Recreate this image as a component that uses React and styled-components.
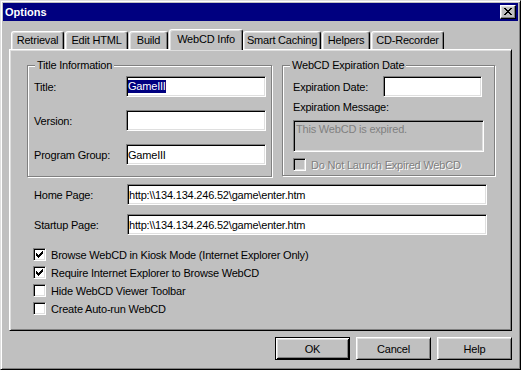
import React from "react";
import styled, { createGlobalStyle } from "styled-components";

const GlobalStyle = createGlobalStyle`
  html, body { margin: 0; padding: 0; background: #c0c0c0; }
  body {
    font-family: "Liberation Sans", Arial, sans-serif;
    font-size: 11px;
    letter-spacing: -0.2px;
    color: #000;
  }
  * { box-sizing: border-box; }
`;

const Window = styled.div`
  width: 521px;
  height: 370px;
  background: #c0c0c0;
  border: 1px solid;
  border-color: #dfdfdf #000 #000 #dfdfdf;
  box-shadow: inset 1px 1px #fff, inset -1px -1px #808080;
  padding: 2px;
  display: flex;
  flex-direction: column;
`;

const TitleBar = styled.div`
  height: 18px;
  background: #000080;
  color: #fff;
  font-weight: bold;
  letter-spacing: 0;
  display: flex;
  align-items: center;
  justify-content: space-between;
  padding: 0 2px 0 2px;
`;

const CloseButton = styled.div`
  width: 16px;
  height: 14px;
  background: #c0c0c0;
  border: 1px solid;
  border-color: #fff #000 #000 #fff;
  box-shadow: inset -1px -1px #808080, inset 1px 1px #dfdfdf;
  display: flex;
  align-items: center;
  justify-content: center;
  padding-bottom: 1px;
`;

const Body = styled.div`
  padding: 8px 6px 0 6px;
  display: flex;
  flex-direction: column;
`;

const TabRow = styled.div`
  display: flex;
  align-items: flex-end;
  height: 20px;
  padding-left: 2px;
`;

const Tab = styled.div`
  position: relative;
  z-index: ${(p) => (p.$active ? 2 : 0)};
  width: ${(p) => p.$w}px;
  height: ${(p) => (p.$active ? 21 : 18)}px;
  margin-bottom: ${(p) => (p.$active ? -1 : 0)}px;
  margin-right: ${(p) => (p.$active ? 0 : 1)}px;
  background: #c0c0c0;
  border-top: 1px solid #fff;
  border-left: 1px solid #fff;
  border-right: 1px solid #000;
  border-radius: 3px 3px 0 0;
  box-shadow: inset -1px 0 #808080, inset 1px 1px #dfdfdf;
  display: flex;
  align-items: center;
  justify-content: center;
  padding-bottom: ${(p) => (p.$active ? 3 : 1)}px;
  white-space: nowrap;
`;

const Panel = styled.div`
  position: relative;
  z-index: 1;
  height: 282px;
  background: #c0c0c0;
  border: 1px solid;
  border-color: #fff #000 #000 #fff;
  box-shadow: inset 1px 1px #dfdfdf, inset -1px -1px #808080;
  padding: 15px 16px 0 17px;
`;

const GroupRow = styled.div`
  display: flex;
  align-items: flex-start;
  gap: 10px;
`;

const Group = styled.div`
  position: relative;
  width: ${(p) => p.$w}px;
  height: ${(p) => p.$h}px;
  border: 1px solid #808080;
  box-shadow: inset 1px 1px #fff, 1px 1px #fff;
  padding: 10px 0 0 ${(p) => p.$pl}px;
  display: flex;
  flex-direction: column;
`;

const Legend = styled.span`
  position: absolute;
  top: -7px;
  left: 7px;
  padding: 0 2px;
  line-height: 13px;
  background: #c0c0c0;
`;

const FormRow = styled.div`
  display: flex;
  align-items: center;
  height: 21px;
  margin-bottom: ${(p) => p.$gap || 0}px;
`;

const Label = styled.span`
  width: ${(p) => p.$w}px;
  flex: none;
`;

const Field = styled.div`
  width: ${(p) => p.$w}px;
  height: ${(p) => p.$h || 21}px;
  flex: none;
  background: ${(p) => (p.$disabled ? "#c0c0c0" : "#fff")};
  color: ${(p) => (p.$disabled ? "#808080" : "#000")};
  border: 1px solid;
  border-color: #808080 #fff #fff #808080;
  box-shadow: inset 1px 1px #000, inset -1px -1px #dfdfdf;
  padding: ${(p) => (p.$multi ? "2px 2px" : "0 1px")};
  display: flex;
  align-items: ${(p) => (p.$multi ? "flex-start" : "center")};
  white-space: nowrap;
  overflow: hidden;
`;

const Selected = styled.span`
  background: #000080;
  color: #fff;
  line-height: 13px;
`;

const ExpLabel = styled.div`
  line-height: 13px;
  margin: 4px 0 6px;
`;

const PageRows = styled.div`
  display: flex;
  flex-direction: column;
  gap: 9px;
  margin-top: 7px;
  padding-left: 7px;
`;

const CheckList = styled.div`
  display: flex;
  flex-direction: column;
  gap: 5px;
  margin-top: 13px;
  padding-left: 6px;
`;

const CheckRow = styled.div`
  display: flex;
  align-items: center;
  height: 13px;
  margin-top: ${(p) => p.$mt || 0}px;
  color: ${(p) => (p.$disabled ? "#808080" : "#000")};
  text-shadow: ${(p) => (p.$disabled ? "1px 1px #fff" : "none")};
  white-space: nowrap;
`;

const Box = styled.span`
  width: 13px;
  height: 13px;
  flex: none;
  margin-right: 5px;
  background: ${(p) => (p.$disabled ? "#c0c0c0" : "#fff")};
  border: 1px solid;
  border-color: #808080 #fff #fff #808080;
  box-shadow: inset 1px 1px #000, inset -1px -1px #dfdfdf;
  display: flex;
  align-items: center;
  justify-content: center;
`;

const ButtonRow = styled.div`
  display: flex;
  justify-content: flex-end;
  gap: 6px;
  margin-top: 6px;
`;

const Button = styled.div`
  width: 75px;
  height: 23px;
  background: #c0c0c0;
  border: 1px solid;
  border-color: ${(p) => (p.$default ? "#000" : "#fff #000 #000 #fff")};
  box-shadow: ${(p) =>
    p.$default
      ? "inset 1px 1px #fff, inset -1px -1px #000, inset 2px 2px #dfdfdf, inset -2px -2px #808080"
      : "inset 1px 1px #dfdfdf, inset -1px -1px #808080"};
  display: flex;
  align-items: center;
  justify-content: center;
`;

const Pixels = ({ rows, color = "#000" }) => (
  <svg width={rows[0].length} height={rows.length} shapeRendering="crispEdges">
    {rows.flatMap((r, y) =>
      [...r].map((c, x) =>
        c === "#" ? <rect key={`${x}-${y}`} x={x} y={y} width="1" height="1" fill={color} /> : null
      )
    )}
  </svg>
);

const CLOSE = [
  "##....##",
  ".##..##.",
  "..####..",
  "...##...",
  "..####..",
  ".##..##.",
  "##....##",
];

const CHECK = [
  "......#",
  ".....##",
  "#...###",
  "##.###.",
  "#####..",
  ".###...",
  "..#....",
];

const tabs = [
  ["Retrieval", 53],
  ["Edit HTML", 63],
  ["Build", 39],
  ["WebCD Info", 74],
  ["Smart Caching", 78],
  ["Helpers", 48],
  ["CD-Recorder", 73],
];

const checks = [
  ["Browse WebCD in Kiosk Mode (Internet Explorer Only)", true],
  ["Require Internet Explorer to Browse WebCD", true],
  ["Hide WebCD Viewer Toolbar", false],
  ["Create Auto-run WebCD", false],
];

const url = "http:\\\\134.134.246.52\\game\\enter.htm";

export default function App() {
  return (
    <>
      <GlobalStyle />
      <Window>
        <TitleBar>
          <span>Options</span>
          <CloseButton>
            <Pixels rows={CLOSE} />
          </CloseButton>
        </TitleBar>
        <Body>
          <TabRow>
            {tabs.map(([name, w]) => (
              <Tab key={name} $w={w} $active={name === "WebCD Info"}>
                {name}
              </Tab>
            ))}
          </TabRow>
          <Panel>
            <GroupRow>
              <Group $w={245} $h={112} $pl={6}>
                <Legend>Title Information</Legend>
                <FormRow $gap={13}>
                  <Label $w={92}>Title:</Label>
                  <Field $w={140}>
                    <Selected>GameIII</Selected>
                  </Field>
                </FormRow>
                <FormRow $gap={13}>
                  <Label $w={92}>Version:</Label>
                  <Field $w={140} />
                </FormRow>
                <FormRow>
                  <Label $w={92}>Program Group:</Label>
                  <Field $w={140}>GameIII</Field>
                </FormRow>
              </Group>
              <Group $w={213} $h={111} $pl={10}>
                <Legend>WebCD Expiration Date</Legend>
                <FormRow>
                  <Label $w={90}>Expiration Date:</Label>
                  <Field $w={99} />
                </FormRow>
                <ExpLabel>Expiration Message:</ExpLabel>
                <Field $w={191} $h={32} $disabled $multi>
                  This WebCD is expired.
                </Field>
                <CheckRow $disabled $mt={6}>
                  <Box $disabled />
                  Do Not Launch Expired WebCD
                </CheckRow>
              </Group>
            </GroupRow>
            <PageRows>
              <FormRow>
                <Label $w={93}>Home Page:</Label>
                <Field $w={360}>{url}</Field>
              </FormRow>
              <FormRow>
                <Label $w={93}>Startup Page:</Label>
                <Field $w={360}>{url}</Field>
              </FormRow>
            </PageRows>
            <CheckList>
              {checks.map(([text, on]) => (
                <CheckRow key={text}>
                  <Box>{on && <Pixels rows={CHECK} />}</Box>
                  {text}
                </CheckRow>
              ))}
            </CheckList>
          </Panel>
          <ButtonRow>
            <Button $default>OK</Button>
            <Button>Cancel</Button>
            <Button>Help</Button>
          </ButtonRow>
        </Body>
      </Window>
    </>
  );
}
